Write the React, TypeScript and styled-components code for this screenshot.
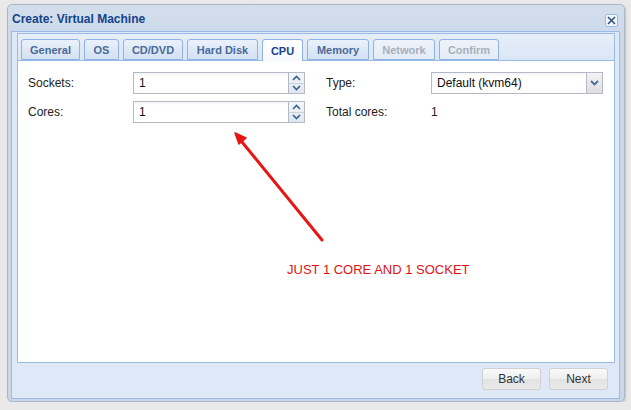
import styled, { createGlobalStyle } from 'styled-components'

const GlobalStyle = createGlobalStyle`
  html, body {
    margin: 0;
    padding: 0;
    background: #e9e9e9;
  }
  body {
    font-family: "Liberation Sans", Arial, sans-serif;
    font-size: 12px;
    color: #000;
  }
  * {
    box-sizing: border-box;
  }
`

const Window = styled.div`
  margin: 4px 0 0 7px;
  width: 618px;
  height: 398px;
  border: 1px solid #a9b6c6;
  border-radius: 5px;
  background: linear-gradient(#d3deec, #cbd8e8 40px, #cad7e7);
  padding: 0 4px 2px 3px;
  display: flex;
  flex-direction: column;
  box-shadow: 1px 1px 2px rgba(0, 0, 0, 0.15);
`

const Header = styled.div`
  height: 26px;
  display: flex;
  align-items: center;
  justify-content: space-between;
  padding: 0 2px 0 1px;
`

const Title = styled.span`
  font-family: "Liberation Sans", Arial, sans-serif;
  font-weight: bold;
  font-size: 12px;
  color: #15428b;
  margin-top: 1px;
`

const CloseBtn = styled.div`
  width: 13px;
  height: 13px;
  margin-top: 4px;
  border: 1px solid #99bbe8;
  border-radius: 2px;
  background: #f2f6fb;
  display: flex;
  align-items: center;
  justify-content: center;
`

const Frame = styled.div`
  flex: 1;
  border: 1px solid #99bbe8;
  background: #dfe8f6;
  padding: 1px 4px 0 5px;
  display: flex;
  flex-direction: column;
`

const TabStrip = styled.div`
  display: flex;
  gap: 4px;
  border: 1px solid #99bbe8;
  background: linear-gradient(#e6eef9, #dbe6f5);
  padding: 5px 0 0 3px;
  height: 28px;
`

const Tab = styled.div<{ $w: number; $active?: boolean; $disabled?: boolean }>`
  width: ${p => p.$w}px;
  height: ${p => (p.$active ? '22px' : '21px')};
  display: flex;
  align-items: center;
  justify-content: center;
  border: 1px solid #8db2e3;
  border-bottom: ${p => (p.$active ? 'none' : '1px solid #8db2e3')};
  border-radius: 3px 3px 0 0;
  background: ${p =>
    p.$active
      ? 'linear-gradient(#ffffff, #f6f9fd)'
      : p.$disabled
        ? 'linear-gradient(#eef3fa, #e3ebf6)'
        : 'linear-gradient(#eaf1fa, #d3e1f3)'};
  font-weight: bold;
  font-size: 11px;
  color: ${p => (p.$active ? '#15428b' : p.$disabled ? '#a6b0bd' : '#4a6a99')};
  position: relative;
  z-index: ${p => (p.$active ? 1 : 0)};
`

const Body = styled.div`
  flex: 1;
  position: relative;
  background: #fff;
  border: 1px solid #99bbe8;
  border-top: none;
  padding: 11px 10px 0 10px;
`

const Columns = styled.div`
  display: flex;
  gap: 21px;
`

const Column = styled.div`
  display: flex;
  flex-direction: column;
  gap: 7px;
`

const Row = styled.div`
  display: flex;
  align-items: center;
  height: 22px;
`

const Label = styled.label`
  width: 105px;
  font-size: 12px;
  color: #222;
`

const Value = styled.span`
  font-size: 12px;
  color: #222;
`

const Field = styled.div`
  width: 172px;
  height: 22px;
  display: flex;
`

const Input = styled.div`
  flex: 1;
  border: 1px solid #b5b8c8;
  border-right: none;
  background: linear-gradient(#f4f4f4, #fff 3px);
  padding: 0 5px;
  display: flex;
  align-items: center;
  font-size: 12px;
  color: #111;
`

const Trigger = styled.div`
  width: 17px;
  border: 1px solid #b5b8c8;
  background: linear-gradient(#f4f7fb, #dfe6ef);
  display: flex;
  flex-direction: column;
`

const SpinHalf = styled.div<{ $top?: boolean }>`
  flex: 1;
  display: flex;
  align-items: center;
  justify-content: center;
  border-bottom: ${p => (p.$top ? '1px solid #c9d3df' : 'none')};
`

const ComboTrigger = styled(Trigger)`
  align-items: center;
  justify-content: center;
  background: linear-gradient(#f3f3f3, #dedede);
`

const ButtonBar = styled.div`
  height: 35px;
  display: flex;
  justify-content: flex-end;
  gap: 8px;
  padding: 5px 7px 0 0;
`

const Button = styled.button`
  width: 59px;
  height: 22px;
  border: 1px solid #d0d0d0;
  border-radius: 3px;
  background: linear-gradient(#fafafa, #eeeeee 50%, #e2e2e2 51%, #eaeaea);
  font-family: "Liberation Sans", Arial, sans-serif;
  font-size: 12px;
  color: #333;
  padding: 0;
`

const Note = styled.span`
  position: absolute;
  left: 269px;
  top: 201px;
  font-family: "Liberation Sans", Arial, sans-serif;
  font-size: 13px;
  color: #e31212;
`

const ArrowSvg = styled.svg`
  position: absolute;
  left: 0;
  top: 0;
  pointer-events: none;
`

const Up = () => (
  <svg width="9" height="6" viewBox="0 0 9 6">
    <path d="M1 5 L4.5 1.5 L8 5" fill="none" stroke="#3b5e91" strokeWidth="1.6" />
  </svg>
)

const Down = () => (
  <svg width="9" height="6" viewBox="0 0 9 6">
    <path d="M1 1 L4.5 4.5 L8 1" fill="none" stroke="#3b5e91" strokeWidth="1.6" />
  </svg>
)

function SpinField(props: { value: string }) {
  return (
    <Field>
      <Input>{props.value}</Input>
      <Trigger>
        <SpinHalf $top>
          <Up />
        </SpinHalf>
        <SpinHalf>
          <Down />
        </SpinHalf>
      </Trigger>
    </Field>
  )
}

const tabs = [
  { name: 'General', w: 59 },
  { name: 'OS', w: 35 },
  { name: 'CD/DVD', w: 60 },
  { name: 'Hard Disk', w: 71 },
  { name: 'CPU', w: 41 },
  { name: 'Memory', w: 62 },
  { name: 'Network', w: 62 },
  { name: 'Confirm', w: 60 },
]

export default function App() {
  return (
    <>
      <GlobalStyle />
      <Window>
        <Header>
          <Title>Create: Virtual Machine</Title>
          <CloseBtn>
            <svg width="9" height="9" viewBox="0 0 9 9">
              <path d="M1 1 L8 8 M8 1 L1 8" stroke="#2b4d80" strokeWidth="1.5" />
            </svg>
          </CloseBtn>
        </Header>
        <Frame>
          <TabStrip>
            {tabs.map(t => (
              <Tab
                key={t.name}
                $w={t.w}
                $active={t.name === 'CPU'}
                $disabled={t.name === 'Network' || t.name === 'Confirm'}>
                {t.name}
              </Tab>
            ))}
          </TabStrip>
          <Body>
            <Columns>
              <Column>
                <Row>
                  <Label>Sockets:</Label>
                  <SpinField value="1" />
                </Row>
                <Row>
                  <Label>Cores:</Label>
                  <SpinField value="1" />
                </Row>
              </Column>
              <Column>
                <Row>
                  <Label>Type:</Label>
                  <Field>
                    <Input>Default (kvm64)</Input>
                    <ComboTrigger>
                      <svg width="9" height="6" viewBox="0 0 9 6">
                        <path d="M1 1 L4.5 4.5 L8 1" fill="none" stroke="#4a6a99" strokeWidth="1.8" />
                      </svg>
                    </ComboTrigger>
                  </Field>
                </Row>
                <Row>
                  <Label>Total cores:</Label>
                  <Value>1</Value>
                </Row>
              </Column>
            </Columns>
            <ArrowSvg width="400" height="220" viewBox="0 0 400 220">
              <line x1="304" y1="179" x2="224" y2="81" stroke="#e81515" strokeWidth="3" strokeLinecap="round" />
              <path d="M217 72 L228 77 L221 83 Z" fill="#e81515" stroke="#e81515" strokeWidth="1.5" strokeLinejoin="round" />
            </ArrowSvg>
            <Note>JUST 1 CORE AND 1 SOCKET</Note>
          </Body>
          <ButtonBar>
            <Button>Back</Button>
            <Button>Next</Button>
          </ButtonBar>
        </Frame>
      </Window>
    </>
  )
}
